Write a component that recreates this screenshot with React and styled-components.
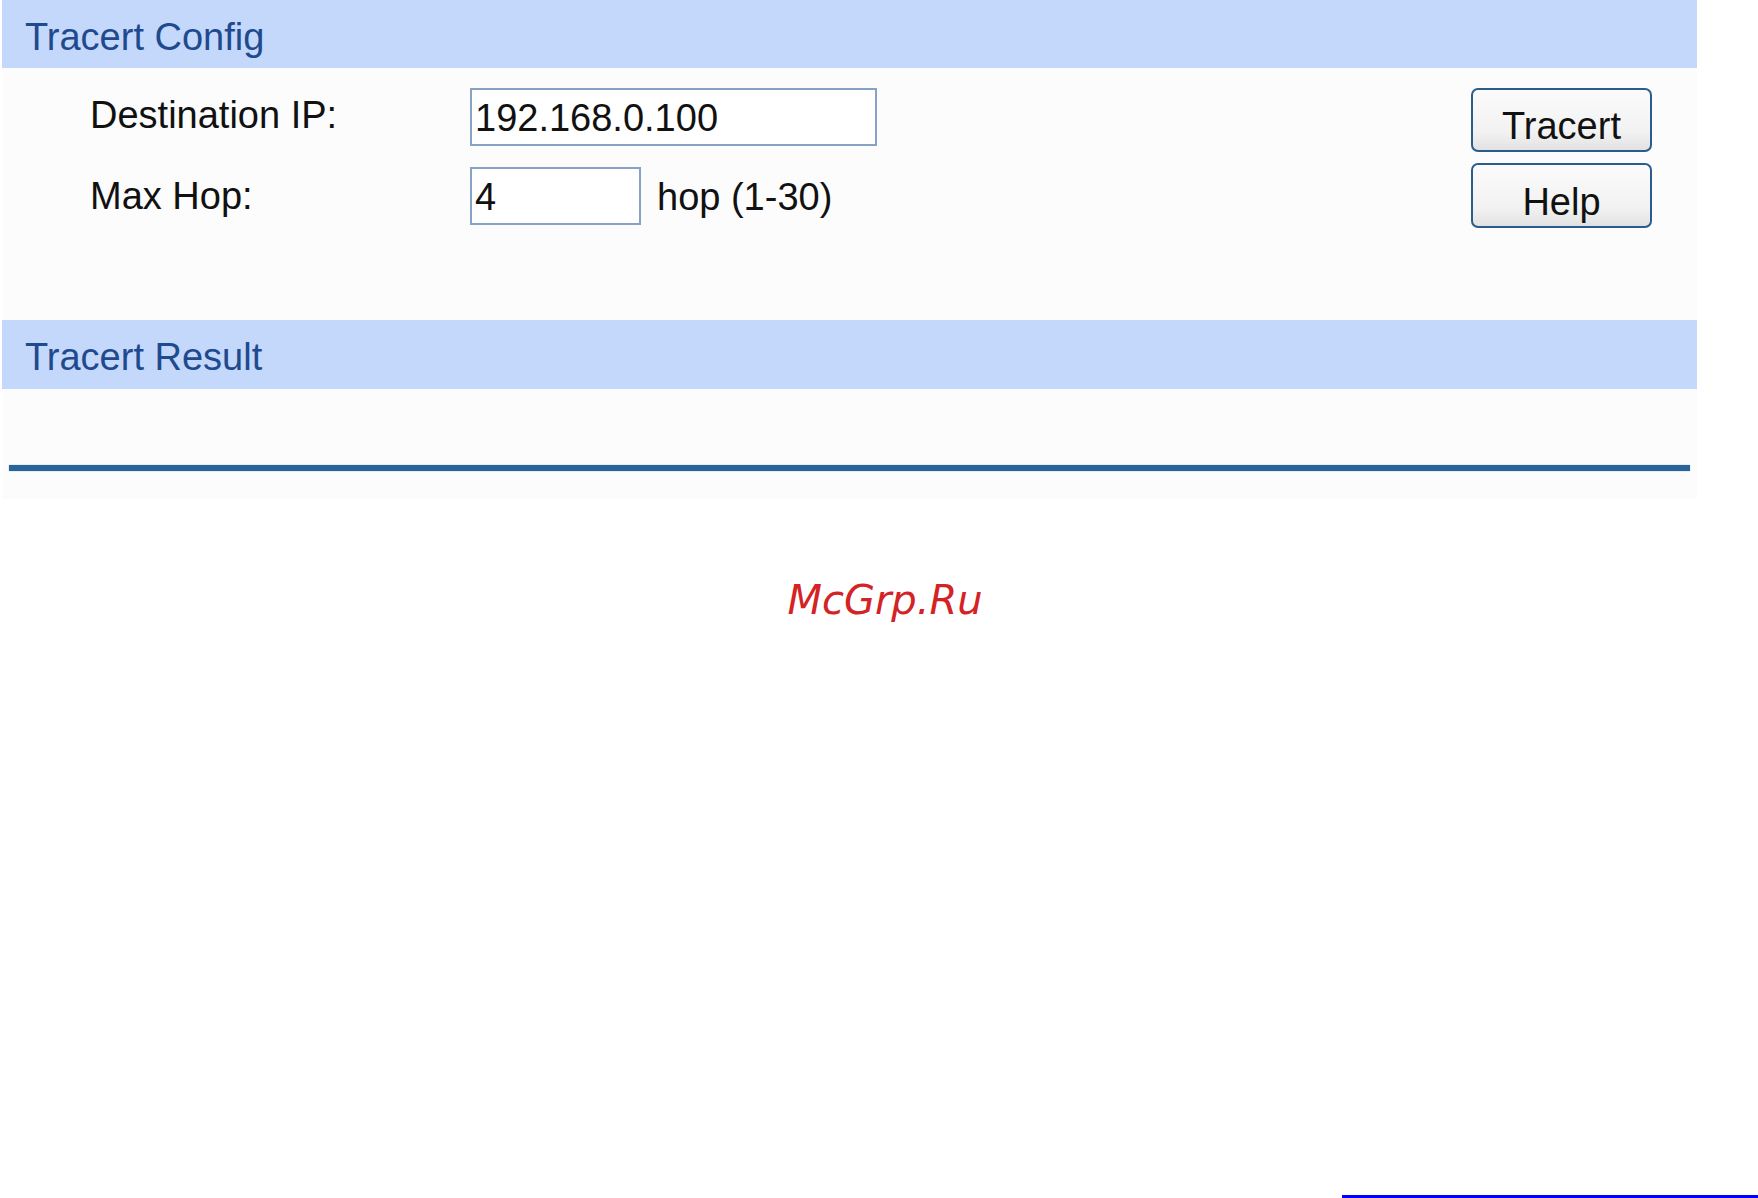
import React from 'react';
import styled, { createGlobalStyle } from 'styled-components';

const Global = createGlobalStyle`
  html, body {
    margin: 0;
    padding: 0;
    background: #ffffff;
    overflow: hidden;
  }
  body {
    font-family: "Liberation Sans", Arial, sans-serif;
  }
`

const Page = styled.div`
  height: 1198px;
  display: flex;
  flex-direction: column;
`
const Panel = styled.div`
  margin-left: 2px;
  width: 1695px;
  height: 499px;
  background: #fcfcfc;
  box-sizing: border-box;
`
const Bar = styled.div`
  box-sizing: border-box;
  height: ${p => p.h}px;
  padding: ${p => p.pt}px 0 0 23px;
  background: #c4d8fc;
  color: #1f4a8e;
  font-size: 38px;
  line-height: 56px;
`
const ConfigBody = styled.div`
  display: flex;
  justify-content: space-between;
  padding: 20px 45px 0 88px;
  height: 252px;
  box-sizing: border-box;
`
const Form = styled.div`
  display: grid;
  grid-template-columns: 380px auto;
  row-gap: 21px;
  align-items: center;
  align-content: start;
`
const Label = styled.div`
  font-size: 38px;
  color: #111111;
  line-height: 40px;
  margin-top: ${p => p.shift}px;
`
const Field = styled.div`
  display: flex;
  align-items: center;
  gap: 16px;
`
const Input = styled.input`
  box-sizing: border-box;
  width: ${p => p.w}px;
  height: 58px;
  border: 2px solid #86a3c4;
  background: #ffffff;
  padding: 2px 0 0 3px;
  font-family: "Liberation Sans", Arial, sans-serif;
  font-size: 38px;
  color: #111111;
  outline: none;
`
const Hint = styled.span`
  font-size: 38px;
  color: #111111;
  padding-top: 2px;
`
const Buttons = styled.div`
  display: flex;
  flex-direction: column;
  gap: 11px;
`
const Button = styled.button`
  box-sizing: border-box;
  width: 181px;
  height: ${p => p.h}px;
  padding: 12px 0 0;
  border: 2px solid #2b5c8e;
  border-radius: 7px;
  background: linear-gradient(#fbfbfb, #f2f2f2 70%, #e2e2e2);
  font-family: "Liberation Sans", Arial, sans-serif;
  font-size: 38px;
  color: #111111;
  line-height: 40px;
`
const ResultBody = styled.div`
  height: 76px;
`
const Rule = styled.div`
  margin: 0 7px;
  height: 6px;
  background: #2a6396;
  box-shadow: 0 0 1px #7fa6c8;
`
const Mark = styled.div`
  margin-top: 78px;
  padding-left: 12px;
  text-align: center;
  font-family: "DejaVu Sans", sans-serif;
  font-style: italic;
  font-size: 40px;
  color: #d42326;
`
const Footer = styled.div`
  margin-top: auto;
  display: flex;
  justify-content: flex-end;
`
const LinkLine = styled.div`
  width: 416px;
  height: 3px;
  background: #0000ff;
`

const App = () => {
    return (
        <>
            <Global />
            <Page>
                <Panel>
                    <Bar h={68} pt={9}>Tracert Config</Bar>
                    <ConfigBody>
                        <Form>
                            <Label shift={-4}>Destination IP:</Label>
                            <Field>
                                <Input w={407} defaultValue="192.168.0.100" />
                            </Field>
                            <Label shift={0}>Max Hop:</Label>
                            <Field>
                                <Input w={171} defaultValue="4" />
                                <Hint>hop (1-30)</Hint>
                            </Field>
                        </Form>
                        <Buttons>
                            <Button h={64}>Tracert</Button>
                            <Button h={65}>Help</Button>
                        </Buttons>
                    </ConfigBody>
                    <Bar h={69} pt={9}>Tracert Result</Bar>
                    <ResultBody />
                    <Rule />
                </Panel>
                <Mark>McGrp.Ru</Mark>
                <Footer>
                    <LinkLine />
                </Footer>
            </Page>
        </>
    )
}

export default App;
